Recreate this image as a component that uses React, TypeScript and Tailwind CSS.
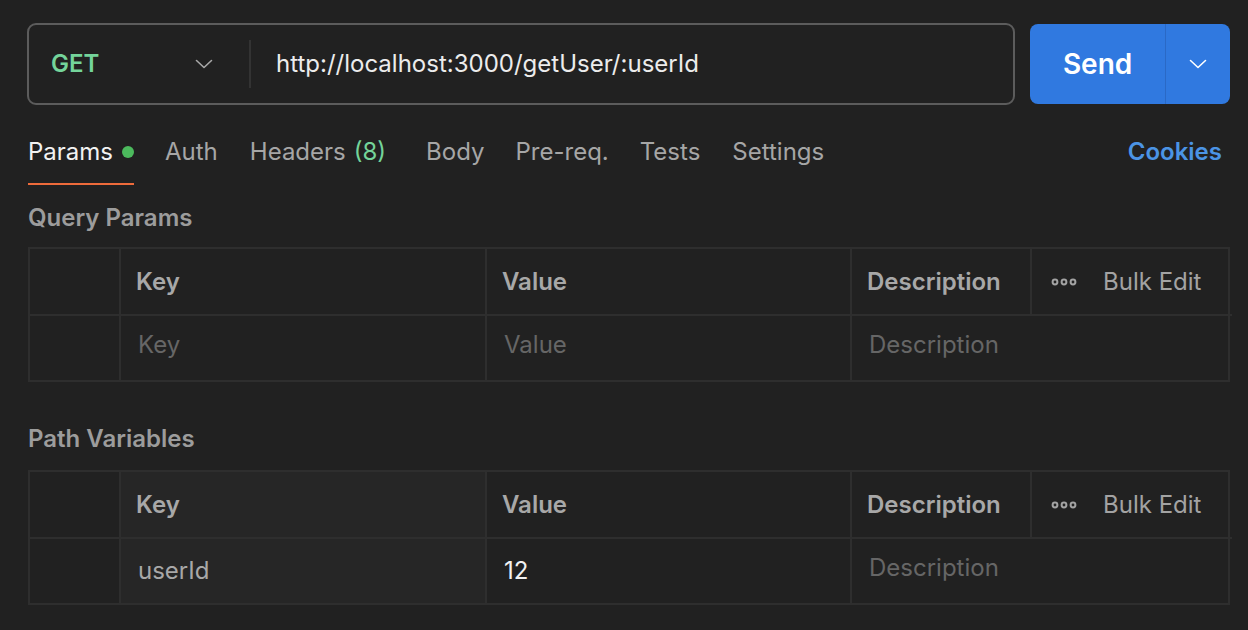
import React from 'react';

const tabs = [
  { label: 'Auth', ml: 'ml-[31px]' },
  { label: 'Headers', count: '(8)', ml: 'ml-[32px]' },
  { label: 'Body', ml: 'ml-[31px]' },
  { label: 'Pre-req.', ml: 'ml-[31px]' },
  { label: 'Tests', ml: 'ml-[31px]' },
  { label: 'Settings', ml: 'ml-[32px]' },
];

function Chevron({ className }: { className?: string }) {
  return (
    <svg width="18" height="10" viewBox="0 0 18 10" fill="none" className={className}>
      <path d="M1.5 1.5L9 8.5L16.5 1.5" stroke="currentColor" strokeWidth="1.6" strokeLinecap="round" strokeLinejoin="round" />
    </svg>
  );
}

function Dots() {
  return (
    <svg width="26" height="8" viewBox="0 0 26 8" fill="none">
      <circle cx="4" cy="4" r="2.4" stroke="#a3a3a3" strokeWidth="2" />
      <circle cx="13" cy="4" r="2.4" stroke="#a3a3a3" strokeWidth="2" />
      <circle cx="22" cy="4" r="2.4" stroke="#a3a3a3" strokeWidth="2" />
    </svg>
  );
}

interface Row {
  key?: string;
  value?: string;
}

function ParamTable({ row, highlightKey }: { row: Row; highlightKey?: boolean }) {
  const cell = 'border-[#2e2e2e] flex items-center';
  const keyBg = highlightKey ? 'bg-[#262626]' : '';
  // placeholders sit a few px higher than filled values
  const placeholder = 'text-[#666666] pb-[6px]';
  return (
    <div className="grid grid-cols-[91px_366px_365px_180px_200px] grid-rows-[67px_64px] border-2 border-[#2e2e2e]">
      {/* header */}
      <div className={`${cell} border-r-2 border-b-2`} />
      <div className={`${cell} ${keyBg} border-r-2 border-b-2 pl-[15px] font-semibold text-[#a8a8a8]`}>Key</div>
      <div className={`${cell} border-r-2 border-b-2 pl-[15px] font-semibold text-[#a8a8a8]`}>Value</div>
      <div className={`${cell} border-r-2 border-b-2 pl-[15px] font-semibold text-[#a8a8a8]`}>Description</div>
      <div className={`${cell} border-b-2 pl-[19px] gap-[26px] text-[#a3a3a3]`}>
        <Dots />
        <span>Bulk Edit</span>
      </div>
      {/* body */}
      <div className={`${cell} border-r-2`} />
      <div className={`${cell} ${keyBg} border-r-2 pl-[17px] ${row.key ? 'text-[#a8a8a8]' : placeholder}`}>
        {row.key ?? 'Key'}
      </div>
      <div className={`${cell} border-r-2 pl-[17px] ${row.value ? 'text-[#f2f2f2]' : placeholder}`}>
        {row.value ?? 'Value'}
      </div>
      <div className={`${cell} col-span-2 pl-[17px] ${placeholder}`}>Description</div>
    </div>
  );
}

export default function App() {
  return (
    <div className="min-h-screen w-[1248px] h-[630px] overflow-hidden bg-[#212121] font-['Inter',sans-serif] text-[24px] pl-[28px] pr-[18px] pt-[23px]">
      {/* Request bar */}
      <div className="flex items-center gap-[15px]">
        <div className="flex items-center -ml-px w-[989px] h-[82px] rounded-[9px] border-2 border-[#5c5c5c]">
          <div className="flex items-center w-[220px] pl-[22px] pr-[36px] justify-between">
            <span className="text-[24px] font-semibold text-[#74d49a]">GET</span>
            <Chevron className="text-[#a8a8a8]" />
          </div>
          <div className="w-[2px] h-[48px] bg-[#333333]" />
          <div className="pl-[25px] text-[#ececec]">http://localhost:3000/getUser/:userId</div>
        </div>
        <div className="flex w-[200px] h-[80px] rounded-[8px] bg-[#3079e0] overflow-hidden">
          <div className="flex-1 flex items-center justify-center text-[28px] font-semibold text-white">Send</div>
          <div className="w-[1px] bg-[#2a69c6]" />
          <div className="w-[64px] flex items-center justify-center text-white">
            <Chevron />
          </div>
        </div>
      </div>

      {/* Tabs */}
      <div className="flex items-start justify-between mt-[28px]">
        <div className="flex items-start">
          <div className="flex flex-col">
            <div className="flex items-center h-[38px] gap-[9px] text-[#f2f2f2]">
              <span>Params</span>
              <span className="w-[12px] h-[12px] rounded-full bg-[#4cba5d]" />
            </div>
            <div className="h-[2px] bg-[#ee6b3b] mt-[12px]" />
          </div>
          {tabs.map((t) => (
            <div key={t.label} className={`flex items-center h-[38px] ${t.ml} gap-[8px] text-[#a6a6a6]`}>
              <span>{t.label}</span>
              {t.count && <span className="text-[#74d49a] mr-[9px]">{t.count}</span>}
            </div>
          ))}
        </div>
        <div className="flex items-center h-[38px] pr-[8px] font-semibold text-[#4b94e5]">Cookies</div>
      </div>

      {/* Query params */}
      <div className="mt-[18px] h-[30px] flex items-center font-semibold text-[#9c9c9c]">Query Params</div>
      <div className="mt-[14px]">
        <ParamTable row={{}} />
      </div>

      {/* Path variables */}
      <div className="mt-[42px] h-[30px] flex items-center font-semibold text-[#9c9c9c]">Path Variables</div>
      <div className="mt-[16px]">
        <ParamTable row={{ key: 'userId', value: '12' }} highlightKey />
      </div>
    </div>
  );
}
